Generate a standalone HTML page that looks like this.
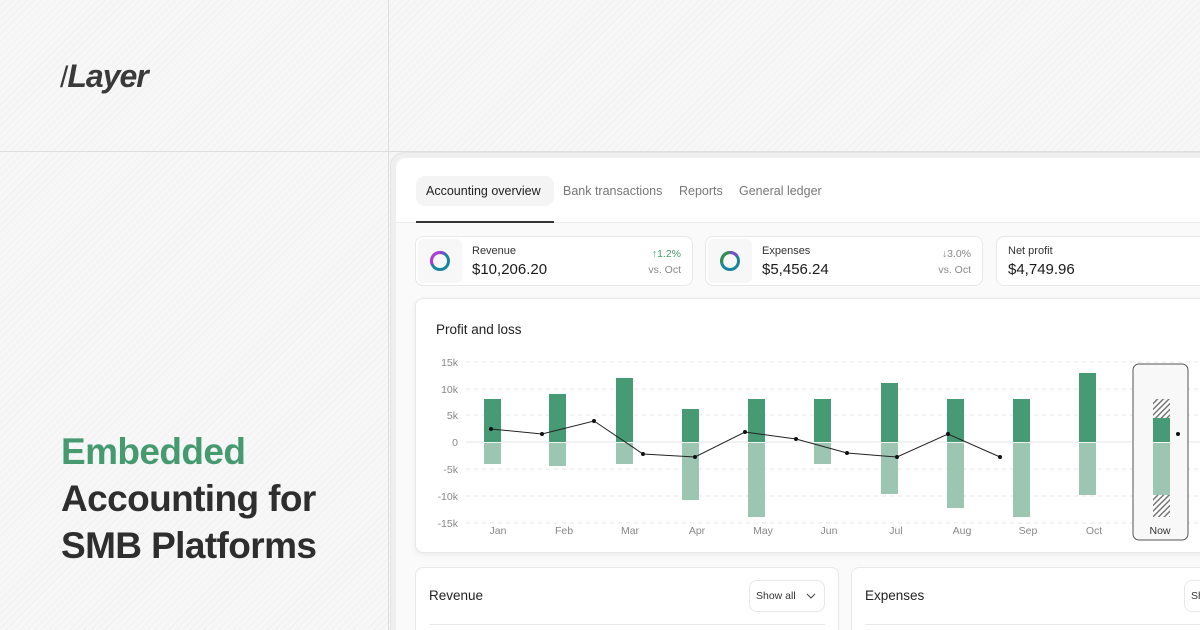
<!DOCTYPE html>
<html><head><meta charset="utf-8"><style>
*{margin:0;padding:0;box-sizing:border-box}
html{width:1200px;height:630px;overflow:hidden}
body{width:1200px;height:630px;overflow:hidden;position:relative;font-family:"Liberation Sans",sans-serif;background:#f6f6f6;
background-image:repeating-linear-gradient(135deg,#f7f7f7 0 4px,#f1f1f1 4px 5px);}
.abs{position:absolute}
.vl{left:388px;top:0;width:1px;height:630px;background:#dedede}
.hl{left:0;top:151px;width:1200px;height:1px;background:#dedede}
.logo{left:60px;top:58px;font-size:32px;font-weight:bold;font-style:italic;color:#3a3a3a;letter-spacing:-1px}
.h{left:61px;font-size:37px;font-weight:bold;color:#2e2e2e;letter-spacing:-0.6px;line-height:47px}
.bezel{left:390px;top:152px;width:820px;height:500px;background:#efefef;border-radius:14px 0 0 0;border-left:1px solid #e4e4e4;border-top:1px solid #e4e4e4}
.panel{left:396px;top:158px;width:820px;height:500px;background:#fafafa;border-radius:10px 0 0 0}
.top{left:396px;top:158px;width:820px;height:65px;background:#fff;border-radius:10px 0 0 0;border-bottom:1px solid #ececec}
.tab{top:184px;font-size:12.5px;color:#777}
.card{background:#fff;border:1px solid #e8e8e8;border-radius:8px}
.lbl{font-size:11px;color:#333}
.val{font-size:15px;color:#1a1a1a;font-weight:500}
.sm{font-size:10.5px;color:#888;text-align:right}
</style></head><body>
<div class="abs vl"></div><div class="abs hl"></div>
<div class="abs logo"><span style="font-weight:normal;font-style:normal;margin-right:0px;font-size:30px">/</span>Layer</div>
<div class="abs h" style="top:428px;color:#459a70">Embedded</div>
<div class="abs h" style="top:475px">Accounting for</div>
<div class="abs h" style="top:522px">SMB Platforms</div>

<div class="abs bezel"></div>
<div class="abs panel"></div>
<div class="abs top"></div>
<div class="abs" style="left:416px;top:176px;width:138px;height:30px;background:#f4f4f4;border-radius:9px"></div>
<div class="abs tab" style="left:426px;color:#222">Accounting overview</div>
<div class="abs tab" style="left:563px">Bank transactions</div>
<div class="abs tab" style="left:679px">Reports</div>
<div class="abs tab" style="left:739px">General ledger</div>
<div class="abs" style="left:416px;top:221px;width:138px;height:2px;background:#333"></div>

<div class="abs card" style="left:415px;top:236px;width:278px;height:50px"></div>
<div class="abs" style="left:418px;top:239px;width:44px;height:44px;background:#f7f7f7;border-radius:6px"></div>
<svg class="abs" style="left:429px;top:250px" width="22" height="22" viewBox="0 0 22 22"><circle cx="11" cy="11" r="8.5" fill="none" stroke="#16879a" stroke-width="3"/><path d="M11 2.5 A8.5 8.5 0 0 0 3.2 14.5" fill="none" stroke="#b63ad6" stroke-width="3"/><path d="M11 2.5 A8.5 8.5 0 0 1 16 4" fill="none" stroke="#7a4cc8" stroke-width="3"/></svg>
<div class="abs lbl" style="left:472px;top:245px">Revenue</div>
<div class="abs val" style="left:472px;top:261px">$10,206.20</div>
<div class="abs sm" style="left:620px;top:248px;width:61px;color:#459a70">↑1.2%</div>
<div class="abs sm" style="left:620px;top:264px;width:61px">vs. Oct</div>

<div class="abs card" style="left:705px;top:236px;width:278px;height:50px"></div>
<div class="abs" style="left:708px;top:239px;width:44px;height:44px;background:#f7f7f7;border-radius:6px"></div>
<svg class="abs" style="left:719px;top:250px" width="22" height="22" viewBox="0 0 22 22"><circle cx="11" cy="11" r="8.5" fill="none" stroke="#16879a" stroke-width="3"/><path d="M11 2.5 A8.5 8.5 0 0 0 3 13" fill="none" stroke="#2e8f4f" stroke-width="3"/><path d="M11 2.5 A8.5 8.5 0 0 1 18 6" fill="none" stroke="#7a4cc8" stroke-width="3"/></svg>
<div class="abs lbl" style="left:762px;top:245px">Expenses</div>
<div class="abs val" style="left:762px;top:261px">$5,456.24</div>
<div class="abs sm" style="left:910px;top:248px;width:61px">↓3.0%</div>
<div class="abs sm" style="left:910px;top:264px;width:61px">vs. Oct</div>

<div class="abs card" style="left:996px;top:236px;width:230px;height:50px"></div>
<div class="abs lbl" style="left:1008px;top:245px">Net profit</div>
<div class="abs val" style="left:1008px;top:261px">$4,749.96</div>

<div class="abs card" style="left:415px;top:298px;width:800px;height:255px;box-shadow:0 2px 6px rgba(0,0,0,0.06)"></div>
<div class="abs" style="left:436px;top:322px;font-size:13.5px;color:#1e1e1e">Profit and loss</div>
<svg class="abs" style="left:0;top:0" width="1200" height="630">
<defs><pattern id="ht" width="4" height="4" patternUnits="userSpaceOnUse" patternTransform="rotate(45)"><rect width="4" height="4" fill="#fff"/><rect width="1.5" height="4" fill="#777"/></pattern></defs>
<g stroke="#e6e6e6" stroke-dasharray="4 4" stroke-width="1">
<line x1="466" y1="362" x2="1200" y2="362"/><line x1="466" y1="389" x2="1200" y2="389"/><line x1="466" y1="415" x2="1200" y2="415"/><line x1="466" y1="469" x2="1200" y2="469"/><line x1="466" y1="496" x2="1200" y2="496"/><line x1="466" y1="523" x2="1200" y2="523"/></g>
<line x1="466" y1="442" x2="1200" y2="442" stroke="#e6e6e6"/>
<g font-size="10.5" fill="#888" text-anchor="end" font-family="Liberation Sans">
<text x="458" y="366">15k</text><text x="458" y="393">10k</text><text x="458" y="419">5k</text><text x="458" y="446">0</text><text x="458" y="473">-5k</text><text x="458" y="500">-10k</text><text x="458" y="527">-15k</text></g>
<rect x="1133" y="364" width="55" height="176" rx="6" fill="#f8f8f8" stroke="#555" stroke-width="1"/>
<g fill="#469a74">
<rect x="484" y="399" width="17" height="43"/><rect x="549" y="394" width="17" height="48"/><rect x="616" y="378" width="17" height="64"/><rect x="682" y="409" width="17" height="33"/><rect x="748" y="399" width="17" height="43"/><rect x="814" y="399" width="17" height="43"/><rect x="881" y="383" width="17" height="59"/><rect x="947" y="399" width="17" height="43"/><rect x="1013" y="399" width="17" height="43"/><rect x="1079" y="373" width="17" height="69"/><rect x="1153" y="418" width="17" height="24"/></g>
<g fill="#9cc6b1">
<rect x="484" y="443" width="17" height="21"/><rect x="549" y="443" width="17" height="23"/><rect x="616" y="443" width="17" height="21"/><rect x="682" y="443" width="17" height="57"/><rect x="748" y="443" width="17" height="74"/><rect x="814" y="443" width="17" height="21"/><rect x="881" y="443" width="17" height="51"/><rect x="947" y="443" width="17" height="65"/><rect x="1013" y="443" width="17" height="74"/><rect x="1079" y="443" width="17" height="52"/><rect x="1153" y="443" width="17" height="52"/></g>
<rect x="1153" y="399" width="17" height="19" fill="url(#ht)"/><rect x="1153" y="495" width="17" height="22" fill="url(#ht)"/>
<polyline points="491,429 542,434 594,421 643,454 695,457 745,432 796,439 847,453 897,457 948,434 1000,457" fill="none" stroke="#222" stroke-width="1"/>
<g fill="#111"><circle cx="491" cy="429" r="2"/><circle cx="542" cy="434" r="2"/><circle cx="594" cy="421" r="2"/><circle cx="643" cy="454" r="2"/><circle cx="695" cy="457" r="2"/><circle cx="745" cy="432" r="2"/><circle cx="796" cy="439" r="2"/><circle cx="847" cy="453" r="2"/><circle cx="897" cy="457" r="2"/><circle cx="948" cy="434" r="2"/><circle cx="1000" cy="457" r="2"/><circle cx="1178" cy="434" r="2"/></g>
<g font-size="10.5" fill="#888" text-anchor="middle" font-family="Liberation Sans">
<text x="498" y="534">Jan</text><text x="564" y="534">Feb</text><text x="630" y="534">Mar</text><text x="697" y="534">Apr</text><text x="763" y="534">May</text><text x="829" y="534">Jun</text><text x="896" y="534">Jul</text><text x="962" y="534">Aug</text><text x="1028" y="534">Sep</text><text x="1094" y="534">Oct</text><text x="1160" y="534" fill="#333">Now</text></g>
</svg>

<div class="abs card" style="left:415px;top:567px;width:424px;height:80px"></div>
<div class="abs" style="left:429px;top:588px;font-size:13.5px;color:#222">Revenue</div>
<div class="abs card" style="left:749px;top:580px;width:76px;height:32px"></div>
<div class="abs" style="left:756px;top:590px;font-size:10.5px;color:#333">Show all</div>
<svg class="abs" style="left:806px;top:592px" width="10" height="8"><path d="M1 2 L5 6 L9 2" fill="none" stroke="#444" stroke-width="1"/></svg>
<div class="abs" style="left:429px;top:624px;width:396px;height:1px;background:#e8e8e8"></div>
<div class="abs card" style="left:851px;top:567px;width:380px;height:80px"></div>
<div class="abs" style="left:865px;top:588px;font-size:13.5px;color:#222">Expenses</div>
<div class="abs card" style="left:1184px;top:580px;width:40px;height:32px"></div>
<div class="abs" style="left:1191px;top:590px;font-size:10.5px;color:#333">Sh</div>
<div class="abs" style="left:865px;top:624px;width:340px;height:1px;background:#e8e8e8"></div>
</body></html>
